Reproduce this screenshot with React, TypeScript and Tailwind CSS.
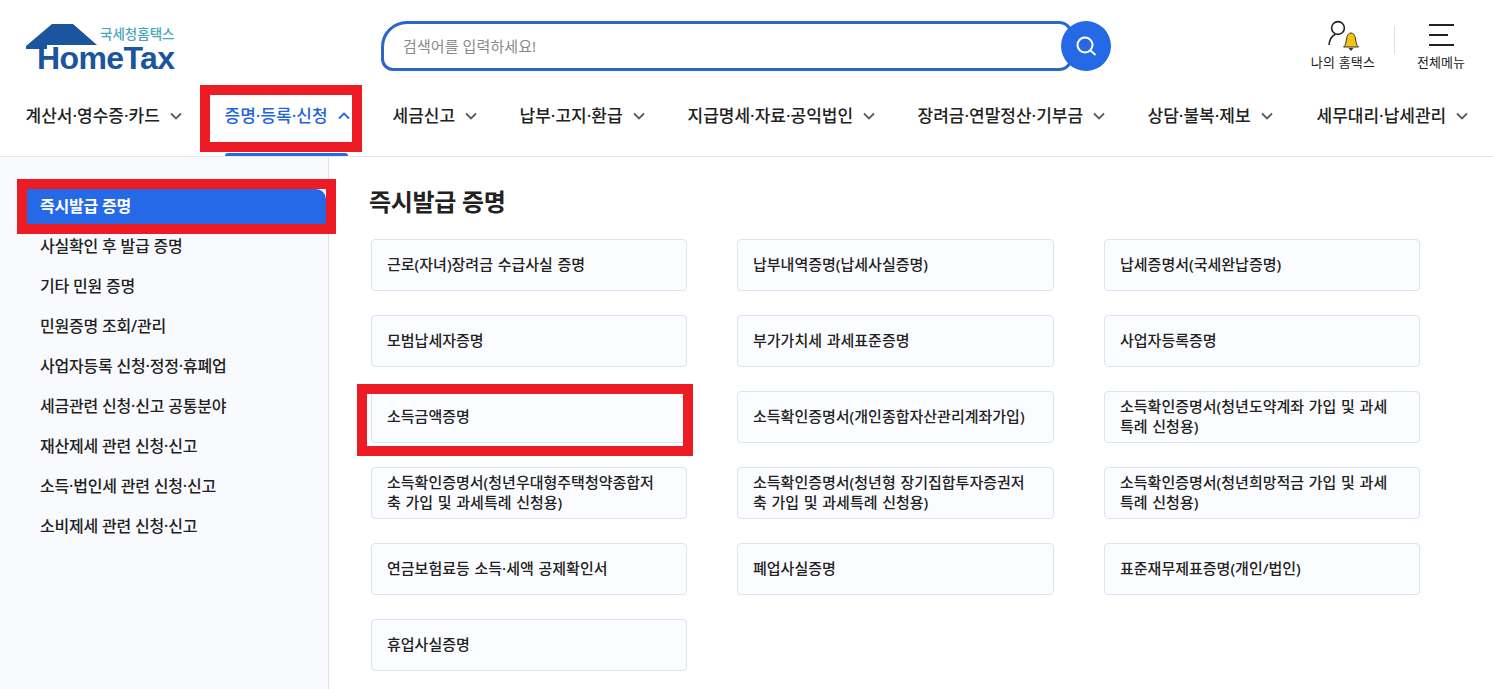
const font = { fontFamily: '"Noto Sans", "Noto Sans CJK KR", sans-serif' };

const navItems = [
  { label: "계산서·영수증·카드", width: "w-[199px]" },
  { label: "증명·등록·신청", width: "w-[168px]", active: true },
  { label: "세금신고", width: "w-[127px]" },
  { label: "납부·고지·환급", width: "w-[168px]" },
  { label: "지급명세·자료·공익법인", width: "w-[230px]" },
  { label: "장려금·연말정산·기부금", width: "w-[230px]" },
  { label: "상담·불복·제보", width: "w-[169px]" },
  { label: "세무대리·납세관리", width: "w-[150px]" },
];

const sideItems = [
  "즉시발급 증명",
  "사실확인 후 발급 증명",
  "기타 민원 증명",
  "민원증명 조회/관리",
  "사업자등록 신청·정정·휴폐업",
  "세금관련 신청·신고 공통분야",
  "재산제세 관련 신청·신고",
  "소득·법인세 관련 신청·신고",
  "소비제세 관련 신청·신고",
];

const cards = [
  "근로(자녀)장려금 수급사실 증명",
  "납부내역증명(납세사실증명)",
  "납세증명서(국세완납증명)",
  "모범납세자증명",
  "부가가치세 과세표준증명",
  "사업자등록증명",
  "소득금액증명",
  "소득확인증명서(개인종합자산관리계좌가입)",
  "소득확인증명서(청년도약계좌 가입 및 과세특례 신청용)",
  "소득확인증명서(청년우대형주택청약종합저축 가입 및 과세특례 신청용)",
  "소득확인증명서(청년형 장기집합투자증권저축 가입 및 과세특례 신청용)",
  "소득확인증명서(청년희망적금 가입 및 과세특례 신청용)",
  "연금보험료등 소득·세액 공제확인서",
  "폐업사실증명",
  "표준재무제표증명(개인/법인)",
  "휴업사실증명",
];

function Chevron({ up }: { up?: boolean }) {
  return (
    <svg width="12" height="8" viewBox="0 0 12 8" fill="none" className="ml-[10px] shrink-0">
      <path
        d={up ? "M1 6.5L6 1.5L11 6.5" : "M1 1.5L6 6.5L11 1.5"}
        stroke={up ? "#2563dc" : "#555b66"}
        strokeWidth="1.8"
      />
    </svg>
  );
}

function Logo() {
  return (
    <div className="relative w-[150px] h-[52px]">
      <svg width="72" height="26" viewBox="0 0 72 26" className="absolute left-0 top-0">
        <path d="M0 22L26 0H47L71 21H21V25H0Z" fill="#1a559e" />
      </svg>
      <span className="absolute left-[74px] top-[1px] text-[13.5px] leading-[18px] font-medium whitespace-nowrap text-[#46a9b8]">
        국세청홈택스
      </span>
      <span
        className="absolute left-[11px] top-[18px] text-[32px] leading-[32px] font-bold text-[#1a559e] tracking-[-0.6px]"
        style={{ fontFamily: '"Liberation Sans", sans-serif' }}
      >
        HomeTax
      </span>
    </div>
  );
}

export default function App() {
  return (
    <div className="w-[1493px] h-[689px] overflow-hidden bg-white text-[#222]" style={font}>
      {/* 상단 헤더 */}
      <header className="relative h-[157px] border-b border-[#e6e8ec]">
        <div className="flex items-start h-[85px] pl-[26px]">
          <div className="mt-[24px]">
            <Logo />
          </div>

          {/* 검색 */}
          <div className="flex items-center mt-[21px] ml-[205px]">
            <div className="w-[692px] h-[50px] flex items-center pl-[19px] border-[3px] border-[#2b66cf] rounded-tl-[26px] rounded-bl-[12px] rounded-r-[14px] text-[15px] text-[#8a8a8a] tracking-[0.1px]">
              검색어를 입력하세요!
            </div>
            <div className="w-[50px] h-[50px] -ml-[12px] z-10 rounded-full bg-[#2669e6] flex items-center justify-center">
              <svg width="22" height="22" viewBox="0 0 22 22" fill="none" stroke="#fff" strokeWidth="2">
                <circle cx="10" cy="10" r="7.5" />
                <path d="M15.5 15.5L20.5 20" />
              </svg>
            </div>
          </div>

          {/* 우측 메뉴 */}
          <div className="flex items-start ml-[199px] mt-[20px]">
            <div className="w-[66px] flex flex-col items-center">
              <svg width="34" height="32" viewBox="0 0 34 32" fill="none">
                <circle cx="12" cy="8" r="6.4" stroke="#222" strokeWidth="1.6" />
                <path d="M3 25C3.5 19.5 6 15.8 9.5 14.2" stroke="#222" strokeWidth="1.6" />
                <path
                  d="M17.5 27C19.5 26 20 22 20.5 19C21 15.5 22.5 13 25 13C27.5 13 29 15.5 29.5 19C30 22 30.5 26 32.5 27Z"
                  fill="#f2c215"
                  stroke="#333"
                  strokeWidth="1"
                />
                <path d="M22.5 28H27.5L25 31Z" fill="#333" />
              </svg>
              <span className="mt-[2px] text-[13px] leading-[16px] tracking-[0.2px] whitespace-nowrap">나의 홈택스</span>
            </div>
            <div className="w-px h-[28px] mt-[6px] ml-[18px] bg-[#dfe1e5]" />
            <div className="w-[48px] ml-[22px] flex flex-col items-center">
              <div className="flex flex-col items-start gap-[8px] w-[25px] mt-[4px] h-[28px]">
                <span className="h-[2px] w-full bg-[#222]" />
                <span className="h-[2px] w-[19px] bg-[#222]" />
                <span className="h-[2px] w-full bg-[#222]" />
              </div>
              <span className="mt-[2px] text-[13px] leading-[16px] whitespace-nowrap">전체메뉴</span>
            </div>
          </div>
        </div>

        {/* 메인 메뉴 */}
        <nav className="flex items-center h-[62px] pl-[25.5px]">
          {navItems.map((item) => (
            <div key={item.label} className={`flex items-center shrink-0 ${item.width}`}>
              <span
                className={`text-[17px] font-medium whitespace-nowrap ${
                  item.active ? "text-[#2563dc]" : "text-[#222]"
                }`}
              >
                {item.label}
              </span>
              <Chevron up={item.active} />
            </div>
          ))}
        </nav>
        <div className="absolute left-[225px] bottom-0 w-[123px] h-[3px] bg-[#2669e6] rounded-t-sm" />
        <div className="absolute left-[200px] top-[85px] w-[162px] h-[67px] border-[10px] border-[#ed1c24]" />
      </header>

      <div className="relative flex h-[532px]">
        {/* 사이드바 */}
        <aside className="w-[329px] shrink-0 border-r border-[#dde3ee] bg-[#f9fafe] pt-[32px] pl-[27px]">
          <ul className="flex flex-col gap-[5px]">
            {sideItems.map((item, i) => (
              <li
                key={item}
                className={`h-[35px] flex items-center pl-[13px] pb-[2px] text-[16px] font-medium tracking-[-0.2px] ${
                  i === 0 ? "w-[299px] bg-[#2669e6] text-white font-semibold rounded-tr-[10px]" : "text-[#222]"
                }`}
              >
                {item}
              </li>
            ))}
          </ul>
        </aside>

        {/* 본문 */}
        <main className="flex-1 pl-[40px] pt-[25px]">
          <h2 className="text-[24px] leading-[40px] font-semibold tracking-[-0.3px] text-[#222]">즉시발급 증명</h2>
          <div className="grid grid-cols-[316px_317px_316px] gap-x-[50px] gap-y-[24px] mt-[17px] ml-[2px]">
            {cards.map((card) => (
              <div
                key={card}
                className="h-[52px] flex items-center pl-[15px] pr-[26px] pb-[2px] border border-[#dbe4f0] rounded-[4px] bg-[#fbfcff] text-[15px] leading-[20px] font-medium [word-spacing:0.8px] text-[#222]"
              >
                {card}
              </div>
            ))}
          </div>
        </main>

        <div className="absolute left-[17px] top-[22px] w-[319px] h-[55px] border-[10px] border-[#ed1c24]" />
        <div className="absolute left-[357px] top-[227px] w-[336px] h-[72px] border-[10px] border-[#ed1c24]" />
      </div>
    </div>
  );
}
